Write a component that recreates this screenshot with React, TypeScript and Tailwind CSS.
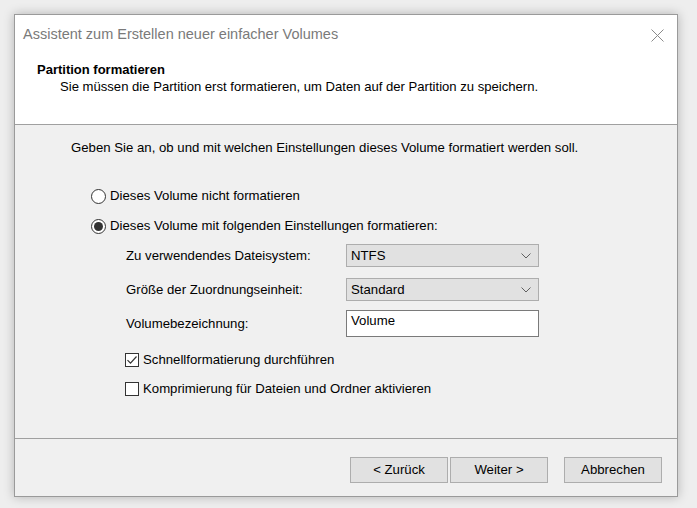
import React from 'react'

const font = { fontFamily: "'Liberation Sans', Arial, sans-serif" }

function Radio({ checked, label }: { checked?: boolean; label: string }) {
  return (
    <div className="flex items-center h-[20px]">
      <div className="w-[15px] h-[15px] rounded-full border border-[#333] bg-white flex items-center justify-center flex-none">
        {checked && <div className="w-[9px] h-[9px] rounded-full bg-[#333]" />}
      </div>
      <span className="ml-[4px] text-[13.2px] text-black">{label}</span>
    </div>
  )
}

function Check({ checked, label }: { checked?: boolean; label: string }) {
  return (
    <div className="flex items-center h-[20px]">
      <div className="w-[14px] h-[14px] border border-[#333] bg-white flex items-center justify-center flex-none">
        {checked && (
          <svg width="12" height="12" viewBox="0 0 12 12">
            <path d="M1.5 6.2 L4.5 9.2 L10.5 2.5" fill="none" stroke="#333" strokeWidth="1.2" />
          </svg>
        )}
      </div>
      <span className="ml-[4px] text-[13.2px] text-black">{label}</span>
    </div>
  )
}

function Combo({ value }: { value: string }) {
  return (
    <div className="w-[193px] h-[23px] bg-[#e1e1e1] border border-[#adadad] flex items-center justify-between pl-[4px] pr-[7px]">
      <span className="text-[13.2px] text-black">{value}</span>
      <svg width="10" height="6" viewBox="0 0 10 6">
        <path d="M0.5 0.5 L5 5 L9.5 0.5" fill="none" stroke="#606060" strokeWidth="1" />
      </svg>
    </div>
  )
}

function Btn({ label }: { label: string }) {
  return (
    <div className="w-[98px] h-[26px] bg-[#e1e1e1] border border-[#adadad] flex items-center justify-center text-[13.2px] text-black">
      {label}
    </div>
  )
}

export default function App() {
  return (
    <div className="w-[697px] h-[508px] bg-[#eeeeee] pt-[14px] pl-[14px] overflow-hidden" style={font}>
      <div className="w-[664px] h-[483px] border border-[#9a9a9a] bg-[#f0f0f0] flex flex-col shadow-[0_0_10px_rgba(0,0,0,0.25)]">
        {/* title bar */}
        <div className="h-[40px] bg-white flex items-center justify-between pl-[8px] pr-[13px]">
          <span className="text-[14.5px] text-[#7a7a7a]">Assistent zum Erstellen neuer einfacher Volumes</span>
          <svg width="13" height="13" viewBox="0 0 13 13">
            <path d="M0.5 0.5 L12.5 12.5 M12.5 0.5 L0.5 12.5" stroke="#8a8a8a" strokeWidth="1" />
          </svg>
        </div>

        {/* header */}
        <div className="h-[70px] bg-white border-b border-[#a0a0a0] pl-[22px] pt-[7px]">
          <div className="text-[13px] leading-[16px] font-bold text-black">Partition formatieren</div>
          <div className="text-[13.1px] leading-[17px] text-black pl-[23px]">
            Sie müssen die Partition erst formatieren, um Daten auf der Partition zu speichern.
          </div>
        </div>

        {/* body */}
        <div className="flex-1 pt-[15px] pl-[56px]">
          <p className="text-[13.2px] leading-[16px] text-black">
            Geben Sie an, ob und mit welchen Einstellungen dieses Volume formatiert werden soll.
          </p>

          <div className="mt-[30px] pl-[20px] flex flex-col gap-[10px]">
            <Radio label="Dieses Volume nicht formatieren" />
            <Radio checked label="Dieses Volume mit folgenden Einstellungen formatieren:" />
          </div>

          <div className="mt-[8px] pl-[55px] flex flex-col">
            <div className="flex items-center h-[23px]">
              <span className="w-[220px] text-[13.2px] text-black pt-[1px]">Zu verwendendes Dateisystem:</span>
              <Combo value="NTFS" />
            </div>
            <div className="flex items-center h-[23px] mt-[11px]">
              <span className="w-[220px] text-[13.2px] text-black pt-[1px]">Größe der Zuordnungseinheit:</span>
              <Combo value="Standard" />
            </div>
            <div className="flex items-center h-[27px] mt-[9px]">
              <span className="w-[220px] text-[13.2px] text-black">Volumebezeichnung:</span>
              <div className="w-[193px] h-[27px] bg-white border border-[#7a7a7a] pl-[4px] text-[13.2px] leading-[20px] text-black">
                Volume
              </div>
            </div>
          </div>

          <div className="mt-[13px] pl-[54px] flex flex-col gap-[9px]">
            <Check checked label="Schnellformatierung durchführen" />
            <Check label="Komprimierung für Dateien und Ordner aktivieren" />
          </div>
        </div>

        {/* footer */}
        <div className="h-[58px] border-t border-[#a0a0a0] pt-[18px] pr-[15px] flex justify-end items-start">
          <div className="flex gap-[2px]">
            <Btn label="< Zurück" />
            <Btn label="Weiter >" />
          </div>
          <div className="ml-[16px]">
            <Btn label="Abbrechen" />
          </div>
        </div>
      </div>
    </div>
  )
}
